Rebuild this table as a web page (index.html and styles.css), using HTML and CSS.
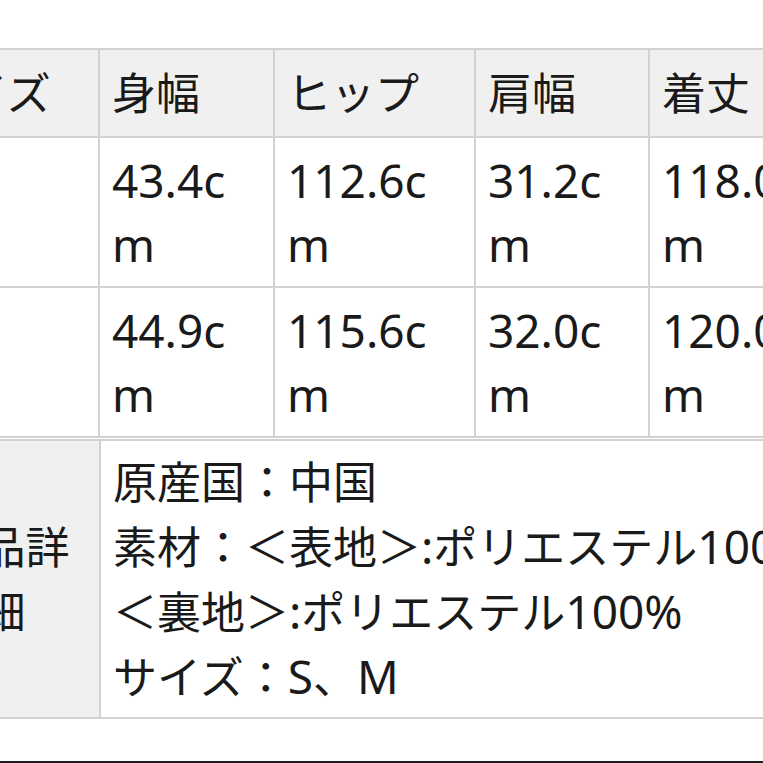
FILE: index.html
```html
<!DOCTYPE html>
<html lang="ja">
<head>
<meta charset="utf-8">
<link rel="stylesheet" href="styles.css">
</head>
<body>
<div class="page">
  <div class="size-table">
    <div class="cell head">サイズ</div>
    <div class="cell head">身幅</div>
    <div class="cell head">ヒップ</div>
    <div class="cell head">肩幅</div>
    <div class="cell head">着丈</div>

    <div class="cell lat">S</div>
    <div class="cell lat">43.4cm</div>
    <div class="cell lat">112.6cm</div>
    <div class="cell lat">31.2cm</div>
    <div class="cell lat">118.0cm</div>

    <div class="cell lat">M</div>
    <div class="cell lat">44.9cm</div>
    <div class="cell lat">115.6cm</div>
    <div class="cell lat">32.0cm</div>
    <div class="cell lat">120.0cm</div>
  </div>

  <div class="detail-table">
    <div class="cell head detail-head">商品詳細</div>
    <div class="cell detail-body">
      <div>原産国：中国</div>
      <div>素材：＜表地＞<span class="lat">:</span>ポリエステル<span class="lat">100%</span></div>
      <div>＜裏地＞<span class="lat">:</span>ポリエステル<span class="lat">100%</span></div>
      <div>サイズ：<span class="lat">S</span>、<span class="lat">M</span></div>
    </div>
  </div>

  <div class="rule"></div>
</div>
</body>
</html>
```

FILE: styles.css
```css
html, body {
  margin: 0;
  padding: 0;
  background: #ffffff;
  overflow: hidden;
}

body {
  font-family: "Noto Sans", "Noto Sans CJK JP", sans-serif;
  font-size: 44px;
  line-height: 64px;
  color: #1a1a1a;
}

.lat {
  font-size: 46px;
}

.page {
  padding-top: 48px;
  width: 1100px;
}

.size-table {
  display: grid;
  grid-template-columns: 190px 173px 199px 172px 180px;
  grid-template-rows: 86px 148px 148px;
  gap: 2px;
  padding: 2px;
  background: #d2d2d2;
  margin-left: -94px;
  width: max-content;
}

.cell {
  background: #ffffff;
  padding: 10px 12px;
  word-break: break-all;
  display: flex;
  flex-direction: column;
  justify-content: center;
}

.cell.head {
  background: #f0f0f0;
}

.detail-table {
  display: grid;
  grid-template-columns: 191px 900px;
  gap: 2px;
  padding: 2px;
  background: #d2d2d2;
  margin-top: 1px;
  margin-left: -94px;
  width: max-content;
}

.detail-head {
  text-align: center;
}

.detail-body {
  white-space: nowrap;
  height: 256px;
}

.rule {
  margin-top: 42px;
  height: 2px;
  background: #1e1e1e;
  width: 763px;
}
```
